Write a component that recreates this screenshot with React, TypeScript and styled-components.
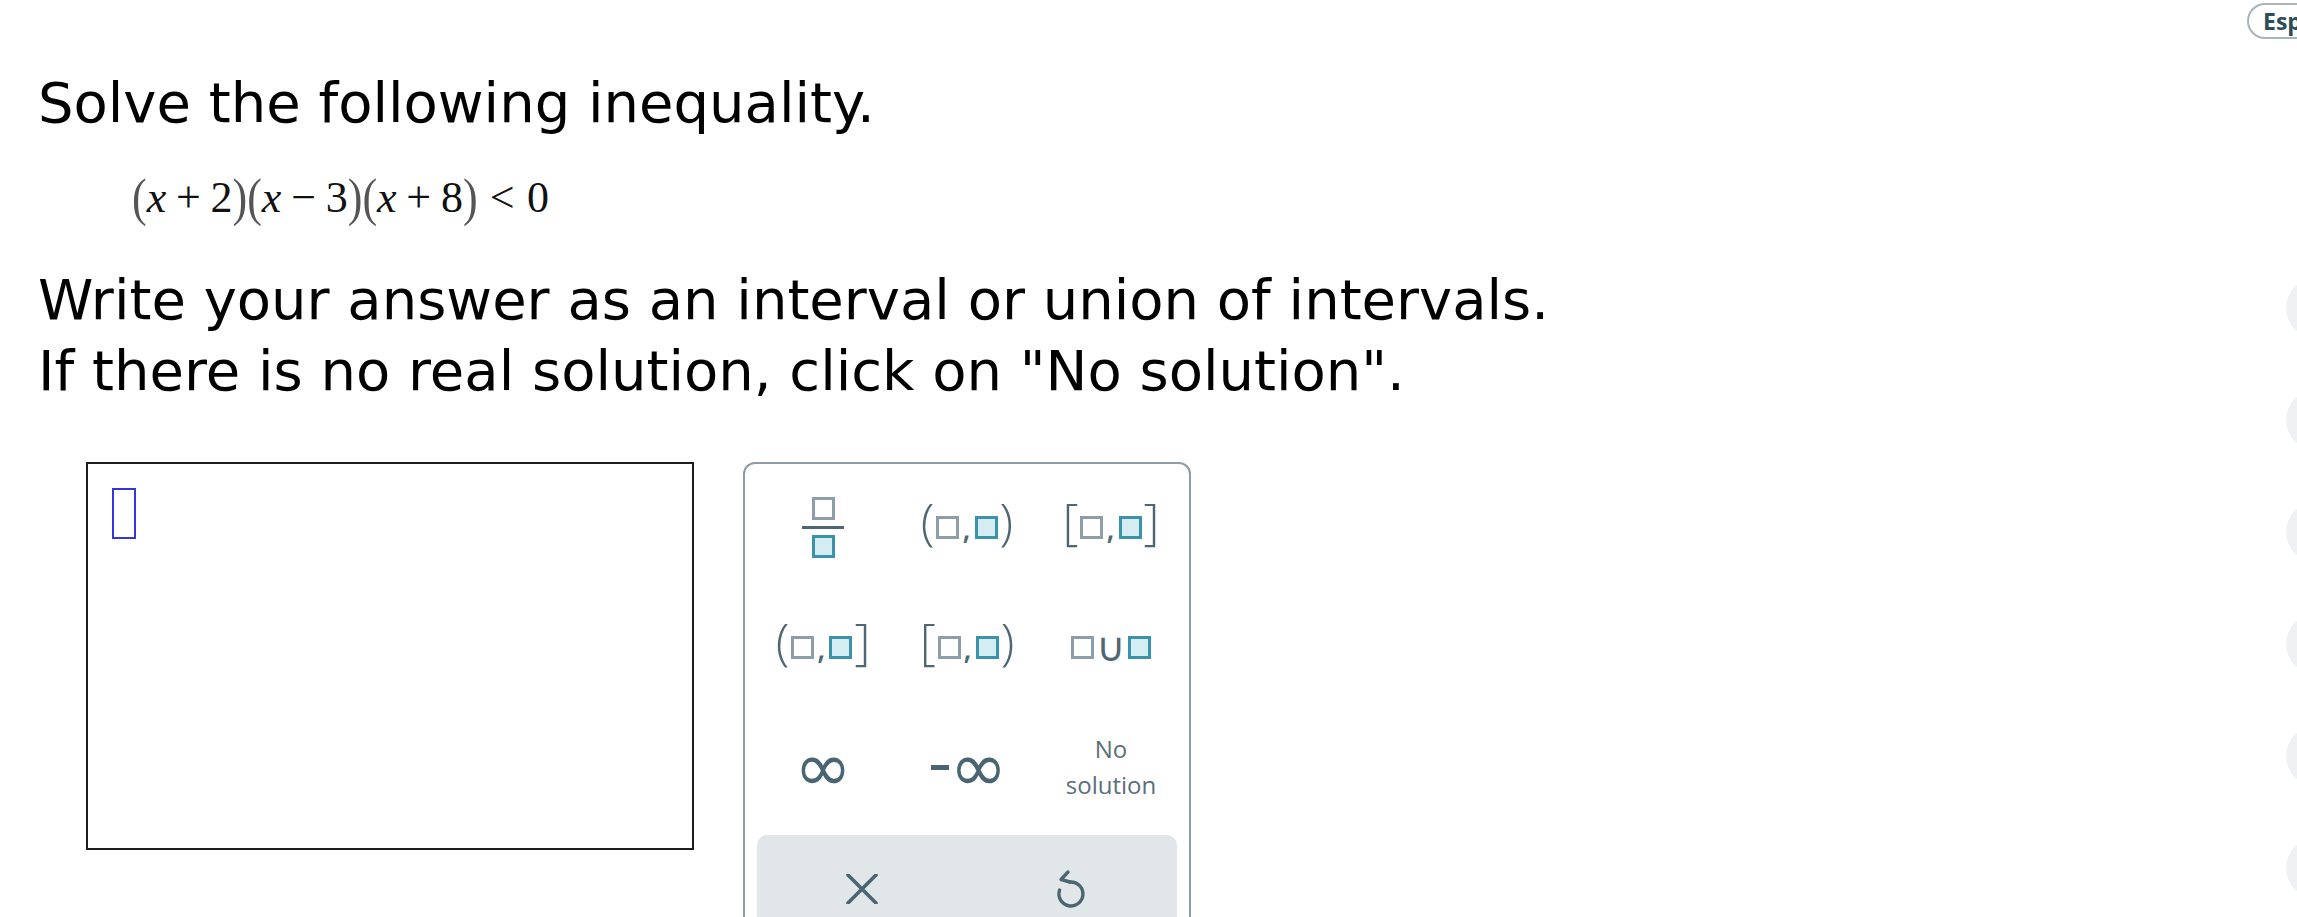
import React from "react";
import styled, { createGlobalStyle } from "styled-components";

const GlobalStyle = createGlobalStyle`
  html, body {
    margin: 0;
    padding: 0;
    background: #ffffff;
    overflow: hidden;
  }
  body {
    font-family: "DejaVu Sans", Verdana, sans-serif;
    color: #000;
  }
`;

const Page = styled.div`
  position: relative;
  width: 2297px;
  height: 917px;
  overflow: hidden;
`;

const Content = styled.div`
  padding: 67px 0 0 38px;
`;

const Title = styled.h1`
  margin: 0;
  font-size: 56px;
  font-weight: 400;
  line-height: 71px;
`;

const MathLine = styled.div`
  margin-top: 30px;
  padding-left: 94px;
  font-family: "Liberation Serif", "Times New Roman", serif;
  font-size: 44px;
  line-height: 60px;
  color: #111;
  white-space: nowrap;
`;

const Paren = styled.span`
  display: inline-block;
  color: #555;
  transform: scaleY(1.2);
`;

const Var = styled.span`
  font-style: italic;
`;

const Op = styled.span<{ $space?: number }>`
  padding: 0 ${(p) => p.$space ?? 0.222}em;
`;

const Instructions = styled.p`
  margin: 36px 0 0;
  font-size: 56px;
  line-height: 71px;
`;

const Workspace = styled.div`
  margin-top: 56px;
  padding-left: 48px;
  display: flex;
  align-items: flex-start;
  gap: 49px;
`;

const AnswerBox = styled.div`
  width: 608px;
  height: 388px;
  box-sizing: border-box;
  border: 2px solid #1e1e1e;
  padding: 24px 0 0 24px;
`;

const Caret = styled.div`
  width: 24px;
  height: 51px;
  box-sizing: border-box;
  border: 2px solid #3434e2;
`;

const Keypad = styled.div`
  width: 448px;
  height: 520px;
  box-sizing: border-box;
  border: 2px solid #8d9ca5;
  border-radius: 12px;
  padding: 3px 6px 0;
  display: flex;
  flex-direction: column;
`;

const KeyGrid = styled.div`
  display: grid;
  grid-template-columns: repeat(3, 144px);
  grid-auto-rows: 120px;
`;

const Key = styled.button`
  all: unset;
  display: flex;
  align-items: center;
  justify-content: center;
  color: #4e6773;
  font-family: "Open Sans", "Lato", sans-serif;
  cursor: pointer;
`;

const Slot = styled.span<{ $filled?: boolean }>`
  display: inline-block;
  flex-shrink: 0;
  width: 23px;
  height: 23px;
  box-sizing: border-box;
  border: 3px solid ${(p) => (p.$filled ? "#3a93aa" : "#8e9ea8")};
  background: ${(p) => (p.$filled ? "#d4edf3" : "#ffffff")};
`;

const Bracket = styled.span`
  font-family: "Open Sans", sans-serif;
  font-weight: 300;
  font-size: 50px;
  line-height: 1;
  color: #4e6773;
  margin: -13px 2px 0;
`;

const Comma = styled.span`
  font-family: "Open Sans", sans-serif;
  font-weight: 600;
  font-size: 30px;
  line-height: 1;
  color: #4e6773;
  margin: 2px 4px 0 3px;
`;

const Union = styled.span`
  font-family: "DejaVu Sans", sans-serif;
  font-size: 40px;
  line-height: 1;
  color: #4e6773;
  margin: 0 2px;
`;

const Fraction = styled.span`
  display: flex;
  flex-direction: column;
  align-items: center;
  gap: 6px;
`;

const FracBar = styled.span`
  display: block;
  width: 42px;
  height: 3px;
  background: #4e6773;
`;

const Infinity = styled.span`
  font-family: "DejaVu Sans", sans-serif;
  font-size: 69px;
  line-height: 1;
  color: #4a6572;
`;

const Minus = styled.span`
  display: inline-block;
  flex-shrink: 0;
  width: 18px;
  height: 5px;
  background: #4a6572;
  margin: 0 1px 0 4px;
`;

const NoSolution = styled.span`
  font-family: "Open Sans", sans-serif;
  font-size: 24px;
  line-height: 36px;
  color: #5b6f79;
  text-align: center;
`;

const ActionBar = styled.div`
  margin: 8px 6px 0;
  height: 108px;
  background: #e1e6e9;
  border-radius: 10px;
  display: grid;
  grid-template-columns: 1fr 1fr;
`;

const ActionButton = styled.button`
  all: unset;
  display: flex;
  align-items: center;
  justify-content: center;
  cursor: pointer;
`;

const LangButton = styled.button`
  position: absolute;
  top: 3px;
  left: 2247px;
  height: 36px;
  box-sizing: border-box;
  border: 2px solid #a9b3b8;
  border-radius: 18px;
  background: #fff;
  padding: 0 16px 0 14px;
  font-family: "Open Sans", sans-serif;
  font-weight: 700;
  font-size: 23px;
  color: #2e4d5b;
  white-space: nowrap;
`;

const SideRail = styled.div`
  position: absolute;
  top: 278px;
  right: -49px;
  display: flex;
  flex-direction: column;
  gap: 52px;
`;

const SideDot = styled.div`
  width: 60px;
  height: 60px;
  border-radius: 50%;
  background: #eff1f3;
`;

const Interval = ({ open, close }: { open: string; close: string }) => (
  <>
    <Bracket>{open}</Bracket>
    <Slot />
    <Comma>,</Comma>
    <Slot $filled />
    <Bracket>{close}</Bracket>
  </>
);

const CloseIcon = () => (
  <svg width="32" height="30" viewBox="0 0 32 30" fill="none">
    <path d="M2 1 L30 29 M30 1 L2 29" stroke="#4b6672" strokeWidth="3.6" strokeLinecap="round" />
  </svg>
);

const UndoIcon = () => (
  <svg width="34" height="40" viewBox="0 0 34 40" fill="none">
    <path
      d="M15 13 A 12 12 0 1 1 4.6 21"
      stroke="#4b6672"
      strokeWidth="3.4"
      strokeLinecap="round"
    />
    <path
      d="M13 3 L6 10.5 L15 13"
      stroke="#4b6672"
      strokeWidth="3.4"
      strokeLinecap="round"
      strokeLinejoin="round"
    />
  </svg>
);

export default function App() {
  return (
    <Page>
      <GlobalStyle />
      <Content>
        <Title>Solve the following inequality.</Title>
        <MathLine>
          <Paren>(</Paren>
          <Var>x</Var>
          <Op>+</Op>2<Paren>)</Paren>
          <Paren>(</Paren>
          <Var>x</Var>
          <Op>−</Op>3<Paren>)</Paren>
          <Paren>(</Paren>
          <Var>x</Var>
          <Op>+</Op>8<Paren>)</Paren>
          <Op $space={0.278}>&lt;</Op>0
        </MathLine>
        <Instructions>
          Write your answer as an interval or union of intervals.
          <br />
          If there is no real solution, click on "No solution".
        </Instructions>
        <Workspace>
          <AnswerBox>
            <Caret />
          </AnswerBox>
          <Keypad>
            <KeyGrid>
              <Key aria-label="fraction">
                <Fraction>
                  <Slot />
                  <FracBar />
                  <Slot $filled />
                </Fraction>
              </Key>
              <Key aria-label="open interval">
                <Interval open="(" close=")" />
              </Key>
              <Key aria-label="closed interval">
                <Interval open="[" close="]" />
              </Key>
              <Key aria-label="left open interval">
                <Interval open="(" close="]" />
              </Key>
              <Key aria-label="right open interval">
                <Interval open="[" close=")" />
              </Key>
              <Key aria-label="union">
                <Slot />
                <Union>∪</Union>
                <Slot $filled />
              </Key>
              <Key aria-label="infinity">
                <Infinity>∞</Infinity>
              </Key>
              <Key aria-label="negative infinity">
                <Minus />
                <Infinity>∞</Infinity>
              </Key>
              <Key aria-label="no solution">
                <NoSolution>
                  No
                  <br />
                  solution
                </NoSolution>
              </Key>
            </KeyGrid>
            <ActionBar>
              <ActionButton aria-label="clear">
                <CloseIcon />
              </ActionButton>
              <ActionButton aria-label="undo">
                <UndoIcon />
              </ActionButton>
            </ActionBar>
          </Keypad>
        </Workspace>
      </Content>
      <LangButton>Español</LangButton>
      <SideRail>
        {Array.from({ length: 6 }).map((_, i) => (
          <SideDot key={i} />
        ))}
      </SideRail>
    </Page>
  );
}
